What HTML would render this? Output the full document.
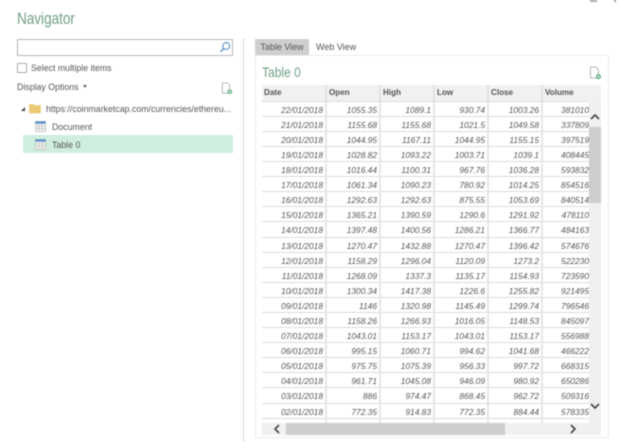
<!DOCTYPE html>
<html><head><meta charset="utf-8">
<style>
html,body{margin:0;padding:0;width:620px;height:448px;overflow:hidden;background:#fff}
body{font-family:"Liberation Sans",sans-serif;color:#444;position:relative}
#w{position:absolute;left:0;top:0;width:620px;height:448px;filter:blur(.4px)}
.a{position:absolute;white-space:nowrap}
.t{transform:scaleX(.945);transform-origin:left center;font-size:9.3px;line-height:12px;color:#555}
.g{position:absolute;left:262px;top:85px;width:327px;height:338px;overflow:hidden}
.r{display:flex;height:15.1px;box-sizing:border-box;border-bottom:1px solid #dcdcdc;font:italic 8.4px/17px "Liberation Sans",sans-serif;color:#555}
.r span{display:block;flex:none;box-sizing:border-box;text-align:right;padding-right:2px;border-right:2px solid #e6e6e6;height:15px;overflow:hidden}
.r span:nth-child(1){width:65px}
.r span:nth-child(2),.r span:nth-child(3),.r span:nth-child(4){width:54px}
.r span:nth-child(5){width:54px}
.r span:nth-child(6){width:46px;border-right:0;padding-right:0}
.h{display:flex;height:16.7px;background:#f1f1f1;border-bottom:1px solid #dcdcdc;box-sizing:border-box;font:bold 8.1px/16px "Liberation Sans",sans-serif;color:#555}
.h span{display:block;flex:none;box-sizing:border-box;padding-left:2px;border-right:2px solid #e2e2e2}
.h span:nth-child(1){width:65px}
.h span:nth-child(2),.h span:nth-child(3),.h span:nth-child(4),.h span:nth-child(5){width:54px}
.h span:nth-child(6){width:46px;border-right:0}
</style></head><body><div id="w">

<div class="a" style="left:17px;top:9px;font-size:16.5px;line-height:20px;color:#6fa085;transform:scaleX(.82);transform-origin:left center">Navigator</div>

<div class="a" style="left:17px;top:39px;width:214px;height:15px;border:1px solid #b5b5b5"></div>
<svg class="a" style="left:218px;top:41px" width="14" height="12" viewBox="0 0 14 12"><circle cx="8.2" cy="5" r="3.4" fill="none" stroke="#5a91c8" stroke-width="1.1"/><path d="M5.7 7.5L2.5 10.8" stroke="#5a91c8" stroke-width="1.4" fill="none"/></svg>

<div class="a" style="left:17px;top:63px;width:8px;height:8px;border:1px solid #aaa"></div>
<div class="a t" style="left:31px;top:62px">Select multiple items</div>
<div class="a t" style="left:17px;top:81px">Display Options</div>
<div class="a" style="left:83px;top:85px;width:0;height:0;border-left:2.5px solid transparent;border-right:2.5px solid transparent;border-top:3px solid #666"></div>

<svg class="a" style="left:221px;top:82px" width="12" height="13" viewBox="0 0 13 14"><path d="M1.5 1H7L9.5 3.5V12H1.5Z" fill="#fff" stroke="#b5b5b5" stroke-width="1"/><circle cx="9.5" cy="10.5" r="2.6" fill="#6db48e"/><circle cx="9.5" cy="10.5" r="1" fill="#e6f3ec"/></svg>

<div class="a" style="left:21px;top:107px;width:0;height:0;border-bottom:4px solid #444;border-left:4px solid transparent"></div>
<svg class="a" style="left:29px;top:103px" width="12" height="11" viewBox="0 0 12 11"><path d="M0.5 1.5H4.5L5.5 2.5H11.5V10H0.5Z" fill="#edc875" stroke="#e6c06a" stroke-width=".6"/></svg>
<div class="a t" style="left:46px;top:103px">https://coinmarketcap.com/currencies/ethereu...</div>

<div class="a" style="left:23px;top:135px;width:210px;height:18px;background:#d0eedd"></div>

<svg class="a" style="left:35px;top:121px" width="11" height="11" viewBox="0 0 11 11"><rect x=".5" y=".5" width="10" height="10" fill="#f4f4f4" stroke="#b9b9b9" stroke-width=".7"/><rect x=".3" y=".3" width="10.4" height="2.4" fill="#5b8fc9"/><path d="M.5 5H10.5M.5 7.5H10.5M3.8 3V10.5M7.2 3V10.5" stroke="#c4c4c4" stroke-width=".7"/></svg>
<div class="a t" style="left:52px;top:121px">Document</div>
<svg class="a" style="left:35px;top:139px" width="11" height="11" viewBox="0 0 11 11"><rect x=".5" y=".5" width="10" height="10" fill="#f4f4f4" stroke="#b9b9b9" stroke-width=".7"/><rect x=".3" y=".3" width="10.4" height="2.4" fill="#5b8fc9"/><path d="M.5 5H10.5M.5 7.5H10.5M3.8 3V10.5M7.2 3V10.5" stroke="#c4c4c4" stroke-width=".7"/></svg>
<div class="a t" style="left:52px;top:139px">Table 0</div>

<div class="a" style="left:243px;top:38px;width:1px;height:404px;background:#d8d8d8"></div>

<div class="a" style="left:590px;top:0;width:7px;height:2px;background:#aaa"></div>
<div class="a" style="left:614px;top:0;width:2px;height:2px;background:#999"></div>

<div class="a" style="left:255px;top:39px;width:54px;height:16px;background:#cfcfcf;font-size:9px;line-height:16px;text-align:center;color:#555">Table View</div>
<div class="a" style="left:316px;top:39px;font-size:9px;line-height:16px;color:#555">Web View</div>

<div class="a" style="left:255px;top:55px;width:352px;height:381px;border:1px solid #ebebeb"></div>
<div class="a" style="left:262px;top:63px;font-size:14px;line-height:18px;color:#6fa085;transform:scaleX(.86);transform-origin:left center">Table 0</div>
<svg class="a" style="left:589px;top:66px" width="13" height="14" viewBox="0 0 13 14"><path d="M1.5 1H7L9.5 3.5V12H1.5Z" fill="#fff" stroke="#b5b5b5" stroke-width="1"/><circle cx="9.5" cy="10.5" r="2.6" fill="#6db48e"/><circle cx="9.5" cy="10.5" r="1" fill="#e6f3ec"/></svg>

<div class="a" style="left:589px;top:85px;width:12px;height:16px;background:#f1f1f1"></div>

<div class="g">
<div class="h"><span>Date</span><span>Open</span><span>High</span><span>Low</span><span>Close</span><span>Volume</span></div>
<div class="r"><span>22/01/2018</span><span>1055.35</span><span>1089.1</span><span>930.74</span><span>1003.26</span><span>381010</span></div>
<div class="r"><span>21/01/2018</span><span>1155.68</span><span>1155.68</span><span>1021.5</span><span>1049.58</span><span>337809</span></div>
<div class="r"><span>20/01/2018</span><span>1044.95</span><span>1167.11</span><span>1044.95</span><span>1155.15</span><span>397519</span></div>
<div class="r"><span>19/01/2018</span><span>1028.82</span><span>1093.22</span><span>1003.71</span><span>1039.1</span><span>408445</span></div>
<div class="r"><span>18/01/2018</span><span>1016.44</span><span>1100.31</span><span>967.76</span><span>1036.28</span><span>593832</span></div>
<div class="r"><span>17/01/2018</span><span>1061.34</span><span>1090.23</span><span>780.92</span><span>1014.25</span><span>854516</span></div>
<div class="r"><span>16/01/2018</span><span>1292.63</span><span>1292.63</span><span>875.55</span><span>1053.69</span><span>840514</span></div>
<div class="r"><span>15/01/2018</span><span>1365.21</span><span>1390.59</span><span>1290.6</span><span>1291.92</span><span>478110</span></div>
<div class="r"><span>14/01/2018</span><span>1397.48</span><span>1400.56</span><span>1286.21</span><span>1366.77</span><span>484163</span></div>
<div class="r"><span>13/01/2018</span><span>1270.47</span><span>1432.88</span><span>1270.47</span><span>1396.42</span><span>574676</span></div>
<div class="r"><span>12/01/2018</span><span>1158.29</span><span>1296.04</span><span>1120.09</span><span>1273.2</span><span>522230</span></div>
<div class="r"><span>11/01/2018</span><span>1268.09</span><span>1337.3</span><span>1135.17</span><span>1154.93</span><span>723590</span></div>
<div class="r"><span>10/01/2018</span><span>1300.34</span><span>1417.38</span><span>1226.6</span><span>1255.82</span><span>921495</span></div>
<div class="r"><span>09/01/2018</span><span>1146</span><span>1320.98</span><span>1145.49</span><span>1299.74</span><span>796546</span></div>
<div class="r"><span>08/01/2018</span><span>1158.26</span><span>1266.93</span><span>1016.05</span><span>1148.53</span><span>845097</span></div>
<div class="r"><span>07/01/2018</span><span>1043.01</span><span>1153.17</span><span>1043.01</span><span>1153.17</span><span>556988</span></div>
<div class="r"><span>06/01/2018</span><span>995.15</span><span>1060.71</span><span>994.62</span><span>1041.68</span><span>466222</span></div>
<div class="r"><span>05/01/2018</span><span>975.75</span><span>1075.39</span><span>956.33</span><span>997.72</span><span>668315</span></div>
<div class="r"><span>04/01/2018</span><span>961.71</span><span>1045.08</span><span>946.09</span><span>980.92</span><span>650286</span></div>
<div class="r"><span>03/01/2018</span><span>886</span><span>974.47</span><span>868.45</span><span>962.72</span><span>509316</span></div>
<div class="r"><span>02/01/2018</span><span>772.35</span><span>914.83</span><span>772.35</span><span>884.44</span><span>578335</span></div>
<div class="r"><span>&nbsp;</span><span>&nbsp;</span><span>&nbsp;</span><span>&nbsp;</span><span>&nbsp;</span><span>&nbsp;</span></div>
</div>

<div class="a" style="left:589px;top:101px;width:12px;height:322px;background:#f0f0f0"></div>
<div class="a" style="left:589px;top:127px;width:12px;height:76px;background:#cdcdcd"></div>
<svg class="a" style="left:589px;top:112px" width="12" height="9" viewBox="0 0 12 9"><path d="M2 7L6 3L10 7" fill="none" stroke="#444" stroke-width="1.6"/></svg>
<svg class="a" style="left:589px;top:402px" width="12" height="9" viewBox="0 0 12 9"><path d="M2 2L6 6L10 2" fill="none" stroke="#444" stroke-width="1.6"/></svg>

<div class="a" style="left:262px;top:423px;width:339px;height:12px;background:#f0f0f0"></div>
<div class="a" style="left:286px;top:423px;width:219px;height:12px;background:#cdcdcd"></div>
<svg class="a" style="left:272px;top:423px" width="10" height="12" viewBox="0 0 10 12"><path d="M7 2L3 6L7 10" fill="none" stroke="#444" stroke-width="1.6"/></svg>
<svg class="a" style="left:568px;top:423px" width="10" height="12" viewBox="0 0 10 12"><path d="M3 2L7 6L3 10" fill="none" stroke="#444" stroke-width="1.6"/></svg>

</div></body></html>
